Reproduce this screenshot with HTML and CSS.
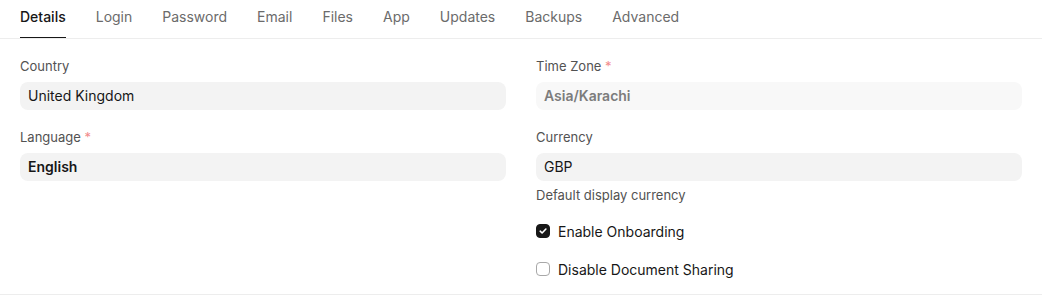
FILE: index.html
```html
<!DOCTYPE html>
<html lang="en">
<head>
    <meta charset="UTF-8">
    <title>System Settings</title>
    <link rel="stylesheet" href="styles.css">
</head>
<body>
    <div class="tabs">
        <a class="tab active">Details</a>
        <a class="tab">Login</a>
        <a class="tab">Password</a>
        <a class="tab">Email</a>
        <a class="tab">Files</a>
        <a class="tab">App</a>
        <a class="tab">Updates</a>
        <a class="tab">Backups</a>
        <a class="tab">Advanced</a>
    </div>

    <div class="section">
        <div class="column">
            <div class="field">
                <div class="label">Country</div>
                <div class="input">United Kingdom</div>
            </div>
            <div class="field">
                <div class="label">Language <span class="reqd">*</span></div>
                <div class="input bold">English</div>
            </div>
        </div>

        <div class="column">
            <div class="field">
                <div class="label">Time Zone <span class="reqd">*</span></div>
                <div class="input bold disabled">Asia/Karachi</div>
            </div>
            <div class="field">
                <div class="label">Currency</div>
                <div class="input">GBP</div>
                <div class="description">Default display currency</div>
            </div>
            <label class="check-field">
                <span class="checkbox checked">
                    <svg width="10" height="10" viewBox="0 0 10 10"><path d="M2.2 5.2 L4.1 7 L7.9 3" fill="none" stroke="#fff" stroke-width="1.6" stroke-linecap="round" stroke-linejoin="round"/></svg>
                </span>
                Enable Onboarding
            </label>
            <label class="check-field">
                <span class="checkbox"></span>
                Disable Document Sharing
            </label>
        </div>
    </div>
</body>
</html>
```

FILE: styles.css
```css
* {
    margin: 0;
    padding: 0;
    box-sizing: border-box;
}

body {
    font-family: 'Inter', 'Noto Sans', sans-serif;
    background: #fff;
    color: #171717;
    width: 1042px;
    height: 298px;
    overflow: hidden;
}

.tabs {
    display: flex;
    gap: 30px;
    padding: 0 20px;
    height: 39px;
    border-bottom: 1px solid #ededed;
}

.tab {
    font-size: 14px;
    line-height: 20px;
    padding-top: 7px;
    color: #6b6b6b;
    border-bottom: 1px solid transparent;
    height: 38px;
    cursor: pointer;
}

.tab.active {
    color: #171717;
    font-weight: 500;
    border-bottom-color: #171717;
}

.section {
    display: grid;
    grid-template-columns: 1fr 1fr;
    column-gap: 30px;
    padding: 19px 20px 0;
    height: 256px;
    border-bottom: 1px solid #ededed;
}

.field {
    margin-bottom: 19px;
}

.label {
    font-size: 13px;
    line-height: 16px;
    color: #525252;
    margin-bottom: 8px;
}

.reqd {
    color: #f28b8b;
}

.input {
    height: 28px;
    background: #f3f3f3;
    border-radius: 8px;
    padding: 0 8px;
    font-size: 14px;
    line-height: 28px;
    color: #171717;
}

.input.bold {
    font-weight: 600;
}

.input.disabled {
    background: #f8f8f8;
    color: #7c7c7c;
}

.description {
    font-size: 13px;
    line-height: 16px;
    color: #525252;
    margin-top: 6px;
}

.check-field {
    display: flex;
    align-items: center;
    gap: 8px;
    height: 20px;
    font-size: 14px;
    color: #171717;
    margin-top: -1px;
    margin-bottom: 19px;
}

.checkbox {
    width: 14px;
    height: 14px;
    border: 1px solid #a8a8a8;
    border-radius: 4px;
    display: flex;
    align-items: center;
    justify-content: center;
}

.checkbox.checked {
    background: #171717;
    border-color: #171717;
}
```
